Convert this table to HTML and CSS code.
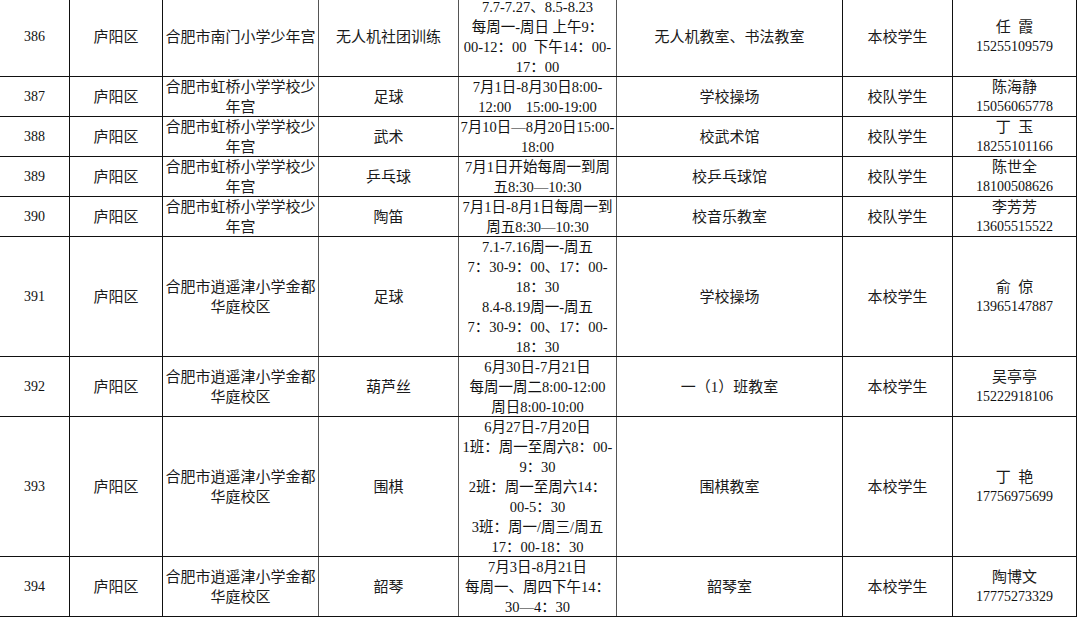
FILE: index.html
```html
<!DOCTYPE html>
<html lang="zh-CN">
<head>
<meta charset="utf-8">
<title>暑期少年宫活动安排</title>
<link rel="stylesheet" href="styles.css">
</head>
<body>
<table class="grid">
  <colgroup>
    <col class="c-no"><col class="c-dist"><col class="c-school"><col class="c-act"><col class="c-time"><col class="c-place"><col class="c-aud"><col class="c-contact">
  </colgroup>
  <tbody>
    <tr>
      <td class="no"><div class="in">386</div></td>
      <td><div class="in">庐阳区</div></td>
      <td class="g"><div class="in">合肥市南门小学少年宫</div></td>
      <td class="g"><div class="in">无人机社团训练</div></td>
      <td class="time g"><div class="in">7.7-7.27、8.5-8.23<br>每周一-周日 上午9：<br>00-12：00&nbsp; 下午14：00-<br>17：00</div></td>
      <td><div class="in">无人机教室、书法教室</div></td>
      <td><div class="in">本校学生</div></td>
      <td><div class="in"><div class="name">任&nbsp;&nbsp;霞</div><div class="tel">15255109579</div></div></td>
    </tr>
    <tr>
      <td class="no"><div class="in">387</div></td>
      <td><div class="in">庐阳区</div></td>
      <td class="g"><div class="in">合肥市虹桥小学学校少<br>年宫</div></td>
      <td class="g"><div class="in">足球</div></td>
      <td class="time g"><div class="in">7月1日-8月30日8:00-<br>12:00&nbsp;&nbsp;&nbsp; 15:00-19:00</div></td>
      <td><div class="in">学校操场</div></td>
      <td><div class="in">校队学生</div></td>
      <td><div class="in"><div class="name">陈海静</div><div class="tel">15056065778</div></div></td>
    </tr>
    <tr>
      <td class="no"><div class="in">388</div></td>
      <td><div class="in">庐阳区</div></td>
      <td class="g"><div class="in">合肥市虹桥小学学校少<br>年宫</div></td>
      <td class="g"><div class="in">武术</div></td>
      <td class="time g"><div class="in">7月10日—8月20日15:00-<br>18:00</div></td>
      <td><div class="in">校武术馆</div></td>
      <td><div class="in">校队学生</div></td>
      <td><div class="in"><div class="name">丁&nbsp;&nbsp;玉</div><div class="tel">18255101166</div></div></td>
    </tr>
    <tr>
      <td class="no"><div class="in">389</div></td>
      <td><div class="in">庐阳区</div></td>
      <td class="g"><div class="in">合肥市虹桥小学学校少<br>年宫</div></td>
      <td class="g"><div class="in">乒乓球</div></td>
      <td class="time g"><div class="in">7月1日开始每周一到周<br>五8:30—10:30</div></td>
      <td><div class="in">校乒乓球馆</div></td>
      <td><div class="in">校队学生</div></td>
      <td><div class="in"><div class="name">陈世全</div><div class="tel">18100508626</div></div></td>
    </tr>
    <tr>
      <td class="no"><div class="in">390</div></td>
      <td><div class="in">庐阳区</div></td>
      <td class="g"><div class="in">合肥市虹桥小学学校少<br>年宫</div></td>
      <td class="g"><div class="in">陶笛</div></td>
      <td class="time g"><div class="in">7月1日-8月1日每周一到<br>周五8:30—10:30</div></td>
      <td><div class="in">校音乐教室</div></td>
      <td><div class="in">校队学生</div></td>
      <td><div class="in"><div class="name">李芳芳</div><div class="tel">13605515522</div></div></td>
    </tr>
    <tr>
      <td class="no"><div class="in">391</div></td>
      <td><div class="in">庐阳区</div></td>
      <td class="g"><div class="in">合肥市逍遥津小学金都<br>华庭校区</div></td>
      <td class="g"><div class="in">足球</div></td>
      <td class="time g"><div class="in">7.1-7.16周一-周五<br>7：30-9：00、17：00-<br>18：30<br>8.4-8.19周一-周五<br>7：30-9：00、17：00-<br>18：30</div></td>
      <td><div class="in">学校操场</div></td>
      <td><div class="in">本校学生</div></td>
      <td><div class="in"><div class="name">俞&nbsp;&nbsp;倞</div><div class="tel">13965147887</div></div></td>
    </tr>
    <tr>
      <td class="no"><div class="in">392</div></td>
      <td><div class="in">庐阳区</div></td>
      <td class="g"><div class="in">合肥市逍遥津小学金都<br>华庭校区</div></td>
      <td class="g"><div class="in">葫芦丝</div></td>
      <td class="time g"><div class="in">6月30日-7月21日<br>每周一周二8:00-12:00<br>周日8:00-10:00</div></td>
      <td><div class="in">一（1）班教室</div></td>
      <td><div class="in">本校学生</div></td>
      <td><div class="in"><div class="name">吴亭亭</div><div class="tel">15222918106</div></div></td>
    </tr>
    <tr>
      <td class="no"><div class="in">393</div></td>
      <td><div class="in">庐阳区</div></td>
      <td class="g"><div class="in">合肥市逍遥津小学金都<br>华庭校区</div></td>
      <td class="g"><div class="in">围棋</div></td>
      <td class="time g"><div class="in">6月27日-7月20日<br>1班：周一至周六8：00-<br>9：30<br>2班：周一至周六14：<br>00-5：30<br>3班：周一/周三/周五<br>17：00-18：30</div></td>
      <td><div class="in">围棋教室</div></td>
      <td><div class="in">本校学生</div></td>
      <td><div class="in"><div class="name">丁&nbsp;&nbsp;艳</div><div class="tel">17756975699</div></div></td>
    </tr>
    <tr>
      <td class="no"><div class="in">394</div></td>
      <td><div class="in">庐阳区</div></td>
      <td class="g"><div class="in">合肥市逍遥津小学金都<br>华庭校区</div></td>
      <td class="g"><div class="in">韶琴</div></td>
      <td class="time g"><div class="in">7月3日-8月21日<br>每周一、周四下午14：<br>30—4：30</div></td>
      <td><div class="in">韶琴室</div></td>
      <td><div class="in">本校学生</div></td>
      <td><div class="in"><div class="name">陶博文</div><div class="tel">17775273329</div></div></td>
    </tr>
  </tbody>
</table>
</body>
</html>
```

FILE: styles.css
```css
html, body {
  margin: 0;
  padding: 0;
  background: #fff;
}

body {
  overflow: hidden;
  font-family: "Liberation Serif", "Noto Sans CJK SC", serif;
  font-size: 15px;
  color: #1a1a1a;
}

.grid {
  border-collapse: collapse;
  table-layout: fixed;
  width: 1078px;
  margin: -4px 0 0 -1px;
}

.c-no { width: 70px; }
.c-dist { width: 93px; }
.c-school { width: 156px; }
.c-act { width: 140px; }
.c-time { width: 158px; }
.c-place { width: 226px; }
.c-aud { width: 110px; }
.c-contact { width: 124px; }

.grid td {
  border: 1px solid #111;
  padding: 0;
  text-align: center;
  vertical-align: middle;
  line-height: 20px;
  white-space: nowrap;
  overflow: visible;
}

.grid td.g {
  border-right-color: #555;
}

.in {
  margin-bottom: -1px;
}

.no {
  font-size: 14px;
  color: #111;
}

.time {
  font-size: 14.5px;
  color: #111;
}

.name {
  height: 20px;
}

.tel {
  height: 20px;
  font-size: 14px;
  color: #111;
}
```
